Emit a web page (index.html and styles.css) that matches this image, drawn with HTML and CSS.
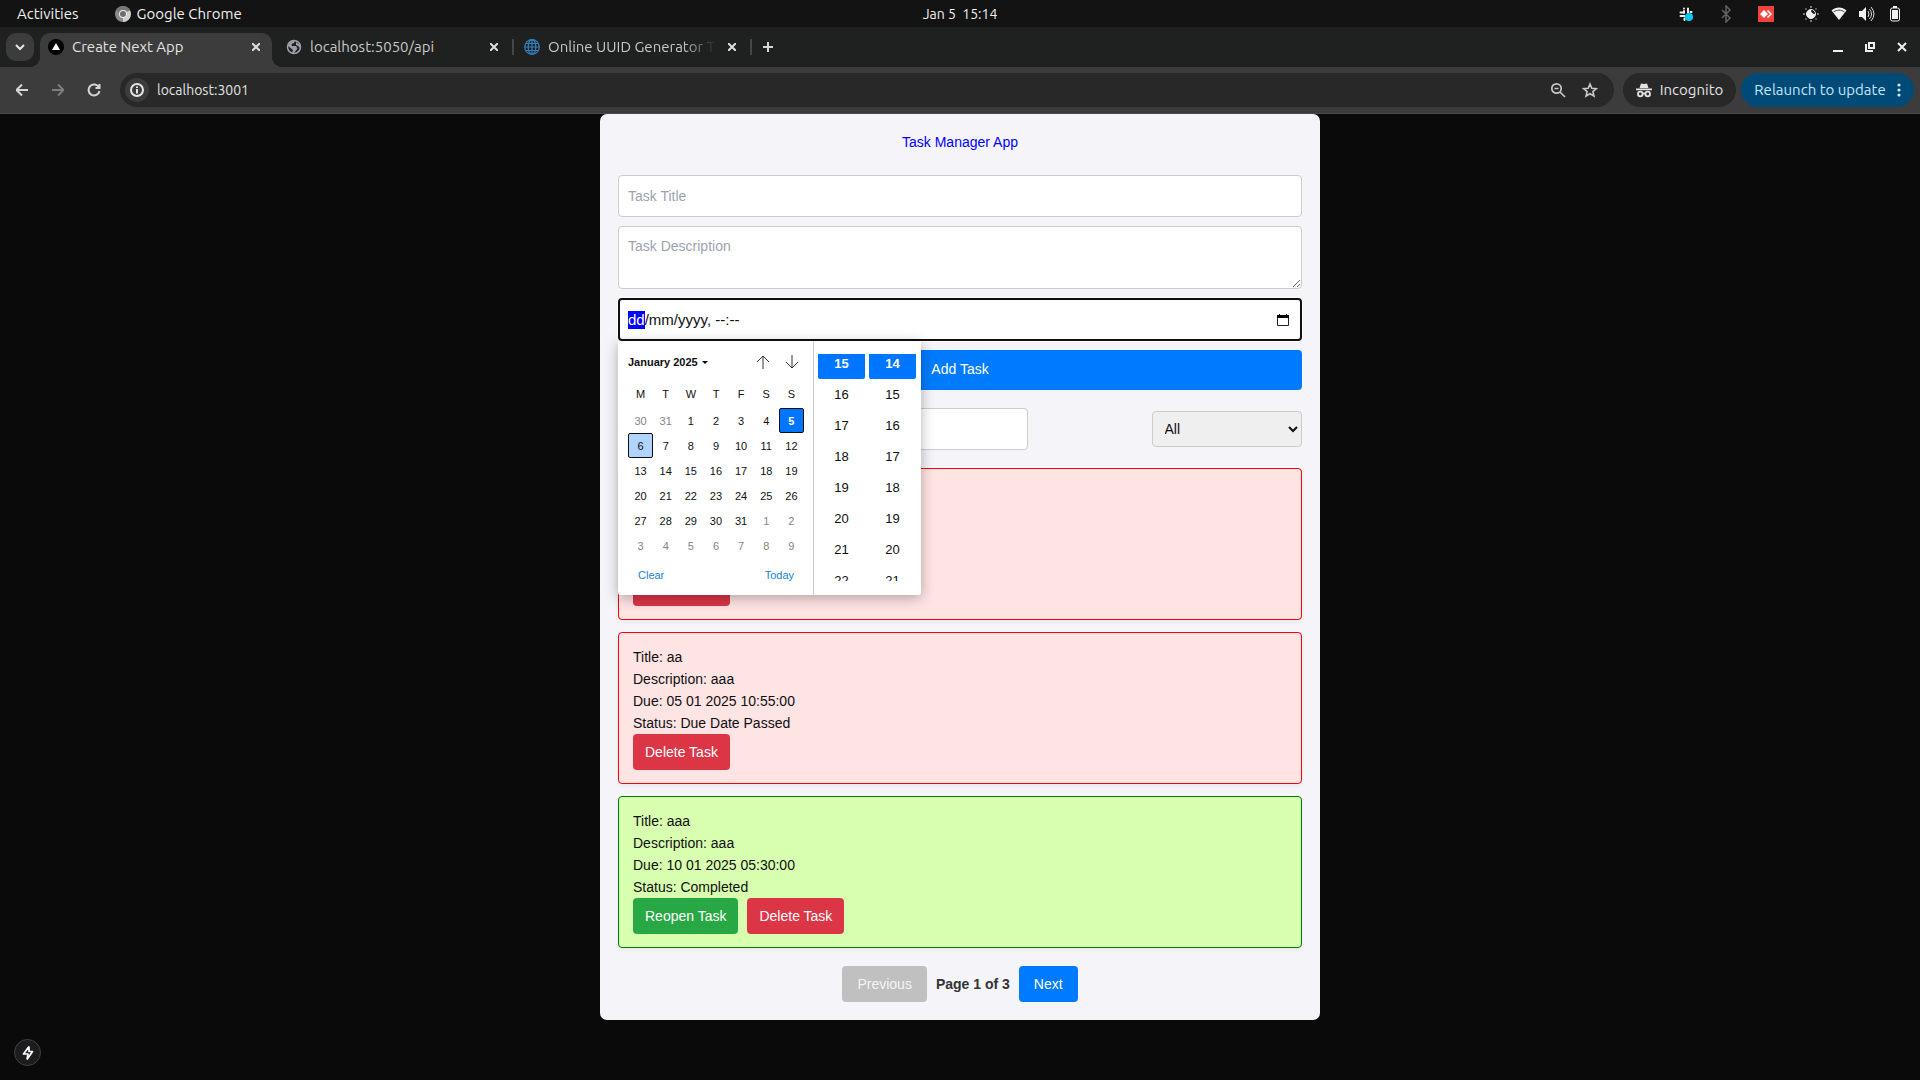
FILE: index.html
```html
<!DOCTYPE html>
<html lang="en">
<head>
<meta charset="utf-8">
<meta name="viewport" content="width=device-width, initial-scale=1">
<title>Create Next App</title>
<link rel="stylesheet" href="styles.css">
</head>
<body>
<header class="system-bar">
  <div class="system-left">
    <button class="system-item" type="button">Activities</button>
    <button class="system-item" type="button">
      <svg width="16" height="16" viewBox="0 0 16 16"><circle cx="8" cy="8" r="8" fill="#8c8c8c"/><path d="M8 8 15 4.500A8 8 0 0 1 8 16Z" fill="#cfcfcf"/><path d="M8 4.500H15A8 8 0 0 0 1.500 3.500L5 10Z" fill="#777"/><circle cx="8" cy="8" r="4" fill="#eee"/><circle cx="8" cy="8" r="3" fill="#6e6e6e"/></svg>
      Google Chrome
    </button>
  </div>
  <time class="system-clock">Jan 5&nbsp; 15:14</time>
  <div class="system-tray">
    <svg class="tray-slack" width="16" height="16" viewBox="0 0 16 16"><g stroke="#f2f2f2" stroke-width="2" stroke-linecap="round"><path d="M6 5v2M6 2.500v0M10 2.500v4M2.500 6.500h3M2.500 10h4M12.500 6h1M6.500 12.500v1.500"/></g><circle cx="11" cy="11" r="4" fill="#00c8f0"/></svg>
    <svg class="tray-bluetooth" width="16" height="18" viewBox="0 0 16 18" fill="none" stroke="#626262" stroke-width="1.500"><path d="M4 5l8 8-4 4V1l4 4-8 8"/></svg>
    <svg class="tray-remote" width="16" height="16" viewBox="0 0 16 16"><path d="M0 0h16v16H0z" fill="#ef443b"/><path d="M6 4l4 4-4 4-4-4z" fill="#fff"/><path d="M9.500 4.500 13 8l-3.500 3.500" fill="none" stroke="#fff" stroke-width="1.500"/></svg>
    <svg width="16" height="16" viewBox="0 0 16 16"><circle cx="8" cy="8" r="4.500" fill="none" stroke="#eee"/><path d="M8 3.500A4.500 4.500 0 1 0 12.500 8 4 4 0 0 1 8 3.500" fill="#eee"/><path d="M8 0v2M8 14v2M0 8h2M14 8h2M2.500 2.500l1 1M12.500 12.500l1 1M2.500 13.500l1-1M12.500 3.500l1-1" stroke="#999" stroke-width="1.500"/></svg>
    <svg width="16" height="16" viewBox="0 0 16 16"><path d="M.500 4.500C5 .500 11 .500 15.500 4.500L8 14Z" fill="#f2f2f2"/><path d="M2.500 6C6 3.500 10 3.500 13.500 6" fill="none" stroke="#444"/></svg>
    <svg width="16" height="16" viewBox="0 0 16 16"><path d="M0 5h3l4-4v14l-4-4H0z" fill="#f2f2f2"/><path d="M9 5q2 3 0 6M10.500 3q4 5 0 10M12 1q6 7 0 14" fill="none" stroke="#ddd"/></svg>
    <svg width="16" height="16" viewBox="0 0 16 16"><rect x="3.500" y="2" width="9" height="13" rx="2" fill="none" stroke="#f2f2f2"/><path d="M6 0h4v2H6zM5 4h6v9H5z" fill="#f2f2f2"/></svg>
  </div>
</header>

<nav class="tab-strip" aria-label="Browser tabs">
  <button class="tab-search" type="button" aria-label="Search tabs"><svg width="10" height="10" viewBox="0 0 10 10" fill="none" stroke="#e6e6e6" stroke-width="2"><path d="M1 3l4 4 4-4"/></svg></button>
  <div class="tab tab-active">
    <svg width="16" height="16" viewBox="0 0 16 16"><circle cx="8" cy="8" r="8" fill="#000"/><path d="M8 4l4 7H4z" fill="#fff"/></svg>
    <span class="tab-title">Create Next App</span>
    <button class="tab-close" type="button" aria-label="Close tab"><svg width="8" height="8" viewBox="0 0 8 8"><path d="M0 0l8 8M8 0 0 8"/></svg></button>
  </div>
  <div class="tab">
    <svg width="16" height="16" viewBox="0 0 16 16"><circle cx="8" cy="8" r="6.500" fill="none" stroke="#9aa0a6" stroke-width="1.500"/><path d="M2 5.500 5.500 2 9 1.500 8 4 5.500 5 6 7h4l1.500 2.500L8 14H6l1-3L2 7ZM10 3l4 3v3l-2-2-2-1Z" fill="#9aa0a6"/></svg>
    <span class="tab-title">localhost:5050/api</span>
    <button class="tab-close" type="button" aria-label="Close tab"><svg width="8" height="8" viewBox="0 0 8 8"><path d="M0 0l8 8M8 0 0 8"/></svg></button>
  </div>
  <div class="tab">
    <svg width="16" height="16" viewBox="0 0 16 16" fill="none" stroke="#3280bd" stroke-width="1.200"><circle cx="8" cy="8" r="7.300"/><ellipse cx="8" cy="8" rx="3.800" ry="7.300"/><path d="M8 .500v15M.500 8h15M2 4.500h12M2 11.500h12"/></svg>
    <span class="tab-title tab-title-fade">Online UUID Generator Tool</span>
    <button class="tab-close" type="button" aria-label="Close tab"><svg width="8" height="8" viewBox="0 0 8 8"><path d="M0 0l8 8M8 0 0 8"/></svg></button>
  </div>
  <button class="tab-new" type="button" aria-label="New tab"><svg width="10" height="10" viewBox="0 0 10 10"><path d="M5 0v10M0 5h10" stroke="#d6d6d6" stroke-width="2"/></svg></button>
  <div class="window-controls">
    <button type="button" aria-label="Minimize"><svg width="10" height="10" viewBox="0 0 10 10"><path d="M0 8h10v2H0z" fill="#eee"/></svg></button>
    <button type="button" aria-label="Restore"><svg width="10" height="10" viewBox="0 0 10 10" fill="none" stroke="#eee" stroke-width="2"><path d="M4 1h5v5H4zM1 2v7h7"/></svg></button>
    <button type="button" aria-label="Close window"><svg width="10" height="10" viewBox="0 0 10 10" stroke="#eee" stroke-width="2"><path d="M1 1l8 8M9 1 1 9"/></svg></button>
  </div>
</nav>

<div class="toolbar">
  <div class="toolbar-nav">
    <button type="button" aria-label="Back"><svg width="12" height="12" viewBox="0 0 12 12"><path d="M12 6H1M6 .500.500 6 6 11.500"/></svg></button>
    <button class="nav-disabled" type="button" aria-label="Forward"><svg width="12" height="12" viewBox="0 0 12 12"><path d="M0 6h11M6 .500 11.500 6 6 11.500"/></svg></button>
    <button type="button" aria-label="Reload"><svg width="14" height="14" viewBox="0 0 14 14"><path d="M12 4.500A5.500 5.500 0 1 0 12.500 8M12.500 1v4h-4"/></svg></button>
  </div>
  <div class="omnibox">
    <button class="site-info" type="button" aria-label="Site information"><svg width="14" height="14" viewBox="0 0 14 14"><circle cx="7" cy="7" r="6" fill="none" stroke="#e6e6e6" stroke-width="2"/><path d="M7 6v4.500M7 3.500v1.500" stroke="#e6e6e6" stroke-width="2"/></svg></button>
    <input class="address" type="text" value="localhost:3001" aria-label="Address">
    <button class="omnibox-action" type="button" aria-label="Zoom"><svg width="16" height="16" viewBox="0 0 16 16" fill="none" stroke="#c7c7c7" stroke-width="1.700"><circle cx="6.500" cy="6.500" r="4.700"/><path d="M10 10l5 5M4.500 6.500h4"/></svg></button>
    <button class="omnibox-action" type="button" aria-label="Bookmark"><svg width="16" height="16" viewBox="0 0 16 16" fill="none" stroke="#c7c7c7" stroke-width="1.600"><path d="M8 2l1.800 4.200 4.600.400-3.500 3 1.100 4.400L8 11.700 4 14l1.100-4.400-3.500-3 4.600-.400z"/></svg></button>
  </div>
  <button class="chip" type="button"><svg width="16" height="16" viewBox="0 0 16 16"><path d="M5 1.500 8 2l3-.500L12.500 6h-9zM0 6.500h16v1.700H0z" fill="#e3e3e3"/><g fill="none" stroke="#e3e3e3" stroke-width="1.800"><circle cx="4.300" cy="12" r="2.300"/><circle cx="11.700" cy="12" r="2.300"/><path d="M6.500 11.500h3"/></g></svg>Incognito</button>
  <button class="chip chip-update" type="button">Relaunch to update<svg width="4" height="14" viewBox="0 0 4 14" fill="#c2e7ff"><circle cx="2" cy="2" r="1.600"/><circle cx="2" cy="7" r="1.600"/><circle cx="2" cy="12" r="1.600"/></svg></button>
</div>

<main class="app">
  <h1 class="app-title">Task Manager App</h1>
  <form class="task-form">
    <input class="field" type="text" placeholder="Task Title" aria-label="Task Title">
    <textarea class="field field-area" placeholder="Task Description" aria-label="Task Description"></textarea>
    <div class="date-wrap">
      <div class="date-field">
        <input class="date-input" id="due" type="text" value="dd/mm/yyyy, --:--" aria-label="Due date">
        <button class="date-open" type="button" aria-label="Show date picker"><svg width="12" height="14" viewBox="0 0 12 14"><path d="M.500 3h11v9.500H.500z" fill="none" stroke="#222"/><path d="M0 2h12v3H0zM2 1h1v2H2zM9 1h1v2H9z" fill="#000"/></svg></button>
      </div>
      <div class="picker">
        <div class="calendar">
          <div class="calendar-head">
            <button class="month" type="button">January 2025<svg width="6" height="3" viewBox="0 0 6 3"><path d="M0 0h6L3 3z"/></svg></button>
            <button class="month-step" type="button" aria-label="Previous month"><svg width="14" height="14" viewBox="0 0 14 14"><path d="M7 14V1M1 7l6-6 6 6"/></svg></button>
            <button class="month-step" type="button" aria-label="Next month"><svg width="14" height="14" viewBox="0 0 14 14"><path d="M7 0v13M1 7l6 6 6-6"/></svg></button>
          </div>
          <table class="days">
            <thead><tr><th>M</th><th>T</th><th>W</th><th>T</th><th>F</th><th>S</th><th>S</th></tr></thead>
            <tbody>
              <tr><td class="out">30</td><td class="out">31</td><td>1</td><td>2</td><td>3</td><td>4</td><td class="chosen">5</td></tr>
              <tr><td class="hovered">6</td><td>7</td><td>8</td><td>9</td><td>10</td><td>11</td><td>12</td></tr>
              <tr><td>13</td><td>14</td><td>15</td><td>16</td><td>17</td><td>18</td><td>19</td></tr>
              <tr><td>20</td><td>21</td><td>22</td><td>23</td><td>24</td><td>25</td><td>26</td></tr>
              <tr><td>27</td><td>28</td><td>29</td><td>30</td><td>31</td><td class="out">1</td><td class="out">2</td></tr>
              <tr><td class="out">3</td><td class="out">4</td><td class="out">5</td><td class="out">6</td><td class="out">7</td><td class="out">8</td><td class="out">9</td></tr>
            </tbody>
          </table>
          <div class="calendar-foot"><button type="button">Clear</button><button type="button">Today</button></div>
        </div>
        <div class="time">
          <ul class="time-list"><li class="time-chosen">15</li><li>16</li><li>17</li><li>18</li><li>19</li><li>20</li><li>21</li><li>22</li></ul>
          <ul class="time-list"><li class="time-chosen">14</li><li>15</li><li>16</li><li>17</li><li>18</li><li>19</li><li>20</li><li>21</li></ul>
        </div>
      </div>
    </div>
    <button class="add" type="submit">Add Task</button>
  </form>

  <div class="filters">
    <input class="field search" type="text" aria-label="Search tasks">
    <select class="status" aria-label="Filter by status"><option>All</option><option>Completed</option></select>
  </div>

  <section class="tasks">
    <article class="task task-late">
      <p>Title: a</p><p>Description: aa</p><p>Due: 05 01 2025 10:50:00</p><p>Status: Due Date Passed</p>
      <div class="task-actions"><button class="btn btn-delete" type="button">Delete Task</button></div>
    </article>
    <article class="task task-late">
      <p>Title: aa</p><p>Description: aaa</p><p>Due: 05 01 2025 10:55:00</p><p>Status: Due Date Passed</p>
      <div class="task-actions"><button class="btn btn-delete" type="button">Delete Task</button></div>
    </article>
    <article class="task task-done">
      <p>Title: aaa</p><p>Description: aaa</p><p>Due: 10 01 2025 05:30:00</p><p>Status: Completed</p>
      <div class="task-actions"><button class="btn btn-reopen" type="button">Reopen Task</button><button class="btn btn-delete" type="button">Delete Task</button></div>
    </article>
  </section>

  <nav class="pagination" aria-label="Pages">
    <button class="btn btn-page" type="button" disabled>Previous</button>
    <span class="page-count">Page 1 of 3</span>
    <button class="btn btn-page" type="button">Next</button>
  </nav>
</main>

<button class="dev-badge" type="button" aria-label="Development tools"><svg width="12" height="16" viewBox="0 0 12 16" fill="none" stroke="#fff" stroke-width="1.700" stroke-linejoin="round"><path d="M7 1.500 1.500 9H6l-1 5.500M7 1.500V6.500h3.500L5 14.500M7 6.500h3.500"/></svg></button>

<script src="script.js"></script>
</body>
</html>
```
FILE: styles.css
```css
* { box-sizing: border-box; }

body {
  margin: 0;
  min-height: 100vh;
  background: #0a0a0a;
  color: #0f0f0f;
  font-family: "Liberation Sans", Arial, sans-serif;
  font-size: 14px;
  line-height: 22px;
}

button, input, textarea, select { font: inherit; color: inherit; }
button { border: 0; padding: 0; background: none; }
svg { display: block; flex: none; }
h1, p, ul { margin: 0; padding: 0; }

.system-bar, .tab-strip, .toolbar {
  display: flex;
  align-items: center;
  font-family: Ubuntu, "Noto Sans", sans-serif;
  font-size: 15px;
  line-height: 20px;
}

/* Desktop bar */
.system-bar { height: 27px; padding: 0 17px; background: #131313; color: #f0f0f0; }
.system-left, .system-tray { display: flex; align-items: center; flex: 1; }
.system-left { gap: 36px; }
.system-item { display: flex; align-items: center; gap: 6px; }
.system-clock { font-size: 14px; }
.system-tray { justify-content: flex-end; gap: 12px; }
.tray-slack { margin-right: 12px; }
.tray-bluetooth { margin-right: 12px; }
.tray-remote { margin-right: 17px; }

/* Tabs */
.tab-strip { height: 40px; padding: 0 6px; background: #1f2120; color: #c7c7c7; }
.tab-search {
  display: grid;
  place-items: center;
  width: 28px;
  height: 28px;
  margin-right: 6px;
  border-radius: 10px;
  background: #3c3c3c;
}
.tab {
  position: relative;
  display: flex;
  align-items: center;
  align-self: flex-end;
  gap: 8px;
  width: 238px;
  height: 34px;
  padding: 0 12px 7px 14px;
}
.tab-active { width: 232px; padding-left: 8px; border-radius: 10px 10px 0 0; background: #3c3c3c; color: #e3e3e3; }
.tab-active::before, .tab-active::after {
  content: "";
  position: absolute;
  bottom: 0;
  width: 10px;
  height: 10px;
}
.tab-active::before { left: -10px; background: radial-gradient(circle at 0 0, transparent 10px, #3c3c3c 10px); }
.tab-active::after { right: -10px; background: radial-gradient(circle at 100% 0, transparent 10px, #3c3c3c 10px); }
.tab:not(.tab-active)::after { content: ""; position: absolute; right: -4px; top: 6px; width: 2px; height: 16px; background: #444746; }
.tab-title { flex: 1; overflow: hidden; white-space: nowrap; }
.tab-title-fade { margin-right: 4px; mask-image: linear-gradient(90deg, #000 80%, transparent); }
.tab-close svg { stroke: #dedede; stroke-width: 2; fill: none; }
.tab-new { display: grid; place-items: center; width: 28px; height: 28px; margin-left: 6px; }
.window-controls { display: flex; gap: 8px; margin-left: auto; }
.window-controls button { display: grid; place-items: center; width: 24px; height: 24px; }

/* Toolbar */
.toolbar {
  height: 47px;
  padding: 0 6px 0 10px;
  border-bottom: 1px solid #4a4a4a;
  background: #3c3c3c;
}
.toolbar-nav { display: flex; gap: 12px; }
.toolbar-nav button { display: grid; place-items: center; width: 24px; height: 24px; }
.toolbar-nav svg { fill: none; stroke: #d6d6d6; stroke-width: 2; }
.toolbar-nav .nav-disabled svg { stroke: #7d7d7d; }
.omnibox {
  display: flex;
  align-items: center;
  flex: 1;
  gap: 8px;
  height: 34px;
  margin: 0 9px 0 14px;
  padding: 0 12px 0 5px;
  border-radius: 17px;
  background: #282828;
}
.site-info { display: grid; place-items: center; width: 24px; height: 24px; border-radius: 50%; background: #3c3c3c; }
.address { flex: 1; min-width: 0; border: 0; padding: 0; background: none; color: #e3e3e3; outline: 0; font-size: 14px; }
.omnibox-action { display: grid; place-items: center; width: 24px; height: 24px; }
.chip {
  display: flex;
  align-items: center;
  justify-content: center;
  gap: 8px;
  width: 113px;
  height: 34px;
  border-radius: 17px;
  background: #282828;
  color: #e3e3e3;
  white-space: nowrap;
}
.chip-update { gap: 11px; width: 173px; margin-left: 5px; background: #004a77; color: #c2e7ff; }

/* Task manager */
.app {
  max-width: 720px;
  margin: 0 auto;
  padding: 18px;
  border-radius: 7px;
  background: #f4f4f9;
}
.app-title { margin-bottom: 23px; color: #00f; font-size: 14px; font-weight: 400; line-height: 20px; text-align: center; }
.task-form { display: flex; flex-direction: column; gap: 9px; }
.field {
  display: block;
  width: 100%;
  height: 42px;
  padding: 8px 9px;
  border: 1px solid #ccc;
  border-radius: 4px;
  background: #fff;
  outline: 0;
}
.field::placeholder { color: #9ca3af; }
.field-area { height: 63px; resize: vertical; }
.date-wrap { position: relative; }
.date-field {
  display: flex;
  align-items: center;
  height: 43px;
  padding: 0 11px 0 8px;
  border: 2px solid #101010;
  border-radius: 4px;
  background: #fff;
  box-shadow: 0 0 0 1px #fff;
}
.date-input { flex: 1; min-width: 0; border: 0; padding: 0; background: none; outline: 0; font-size: 15px; line-height: 18px; }
.date-input::selection { background: #00f; color: #fff; }
.add { height: 40px; padding-bottom: 2px; border-radius: 4px; background: #007bff; color: #fff; }

/* Date picker popup */
.picker {
  position: absolute;
  z-index: 1;
  top: 100%;
  left: 0;
  display: flex;
  width: 303px;
  height: 254px;
  border-radius: 0 0 2px 2px;
  background: #fff;
  box-shadow: 0 3px 14px rgba(0, 0, 0, 0.3);
  font-size: 11px;
  line-height: 14px;
}
.calendar { width: 196px; padding: 11px 9px 0 10px; border-right: 1px solid #ccc; }
.calendar-head { display: flex; align-items: center; gap: 15px; height: 20px; padding-right: 5px; }
.month { display: flex; align-items: center; gap: 4px; margin-right: auto; font-weight: 700; }
.month-step svg { fill: none; stroke: #333; stroke-width: 1; }
.days { width: 176px; margin-top: 10px; border-collapse: separate; border-spacing: 0; table-layout: fixed; }
.days th, .days td { height: 25px; padding: 0; border: 1px solid transparent; font-weight: 400; text-align: center; }
.days th { height: 26px; padding-bottom: 2px; }
.days .out { color: #848484; }
.days .chosen { border-color: #101010; border-radius: 2px; background: #0075ff; color: #fff; font-weight: 700; }
.days .hovered { border-color: #101010; border-radius: 2px; background: #b0d4ff; }
.calendar-foot { display: flex; justify-content: space-between; margin-top: 10px; padding: 0 10px; color: #1a7fd4; }
.time { display: flex; flex: 1; gap: 4px; padding: 13px 5px 14px 4px; }
.time-list { flex: 1; overflow: hidden; list-style: none; font-size: 13px; line-height: 31px; text-align: center; }
.time-list li:first-child { margin-top: -6px; }
.time-chosen { border-radius: 2px; background: #0075ff; color: #fff; font-weight: 700; }

.filters { display: flex; align-items: center; justify-content: space-between; margin: 18px 0; }
.search { width: 60%; }
.status { width: 22%; height: 36px; padding: 0 8px; border: 1px solid #ccc; border-radius: 4px; background: #efefef; }

.tasks { display: flex; flex-direction: column; gap: 12px; }
.task { padding: 13px 14px; border: 1px solid; border-radius: 4px; box-shadow: 0 2px 4px rgba(0, 0, 0, 0.06); }
.task-late { border-color: #f00; background: #ffe4e4; }
.task-done { border-color: #008000; background: #d7ffaf; }
.task-actions { display: flex; gap: 9px; }
.btn { height: 36px; padding: 0 12px; border-radius: 4px; color: #fff; }
.btn-delete { background: #dc3545; }
.btn-reopen { background: #28a745; }
.btn-page { padding: 0 15px; background: #007bff; }
.btn-page:disabled { background: #c0c0c0; color: #f4f4f4; }
.pagination { display: flex; align-items: center; justify-content: center; gap: 9px; margin-top: 18px; }
.page-count { color: #333; font-weight: 700; }

.dev-badge {
  position: fixed;
  left: 14px;
  bottom: 14px;
  display: grid;
  place-items: center;
  width: 27px;
  height: 27px;
  border: 1px solid #444;
  border-radius: 50%;
  background: #1c1c1e;
}
```
FILE: script.js
```js
// Start with the day part of the due date selected.
const due = document.getElementById("due");
due.focus();
due.setSelectionRange(0, 2);
```
